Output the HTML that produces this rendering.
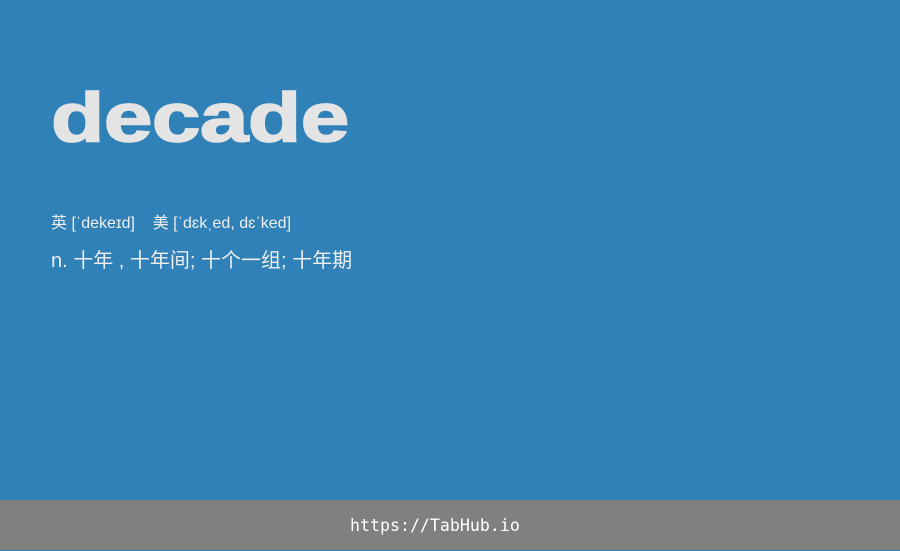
<!DOCTYPE html>
<html><head><meta charset="utf-8"><style>
html,body{margin:0;padding:0;width:900px;height:550px;overflow:hidden;background:#2f81b7;font-family:"Liberation Sans","Noto Sans CJK SC",sans-serif;}
.w{position:absolute;left:51px;top:61px;font-size:86px;font-weight:bold;color:#e4e4e4;line-height:100px;transform:scale(1.015,0.81);transform-origin:0 86px;-webkit-text-stroke:2px #e4e4e4;letter-spacing:-0.5px;}
.p{position:absolute;left:51px;top:214px;font-size:16px;color:#eee;line-height:20px;}
.d{position:absolute;left:51px;top:248px;font-size:20px;color:#eee;line-height:26px;}
.f{position:absolute;left:0;top:500px;width:900px;height:50px;background:#808080;}
.f span{position:absolute;left:350px;top:1px;color:#fff;font-family:"DejaVu Sans Mono","Liberation Mono",monospace;font-size:16.6px;line-height:50px;}
</style></head><body>
<div class="w">decade</div>
<div class="p">英 [ˈdekeɪd]&nbsp;&nbsp;&nbsp;&nbsp;美 [ˈdɛkˌed, dɛˈked]</div>
<div class="d">n. 十年 , 十年间; 十个一组; 十年期</div>
<div class="f"><span>https://TabHub.io</span></div>
</body></html>
